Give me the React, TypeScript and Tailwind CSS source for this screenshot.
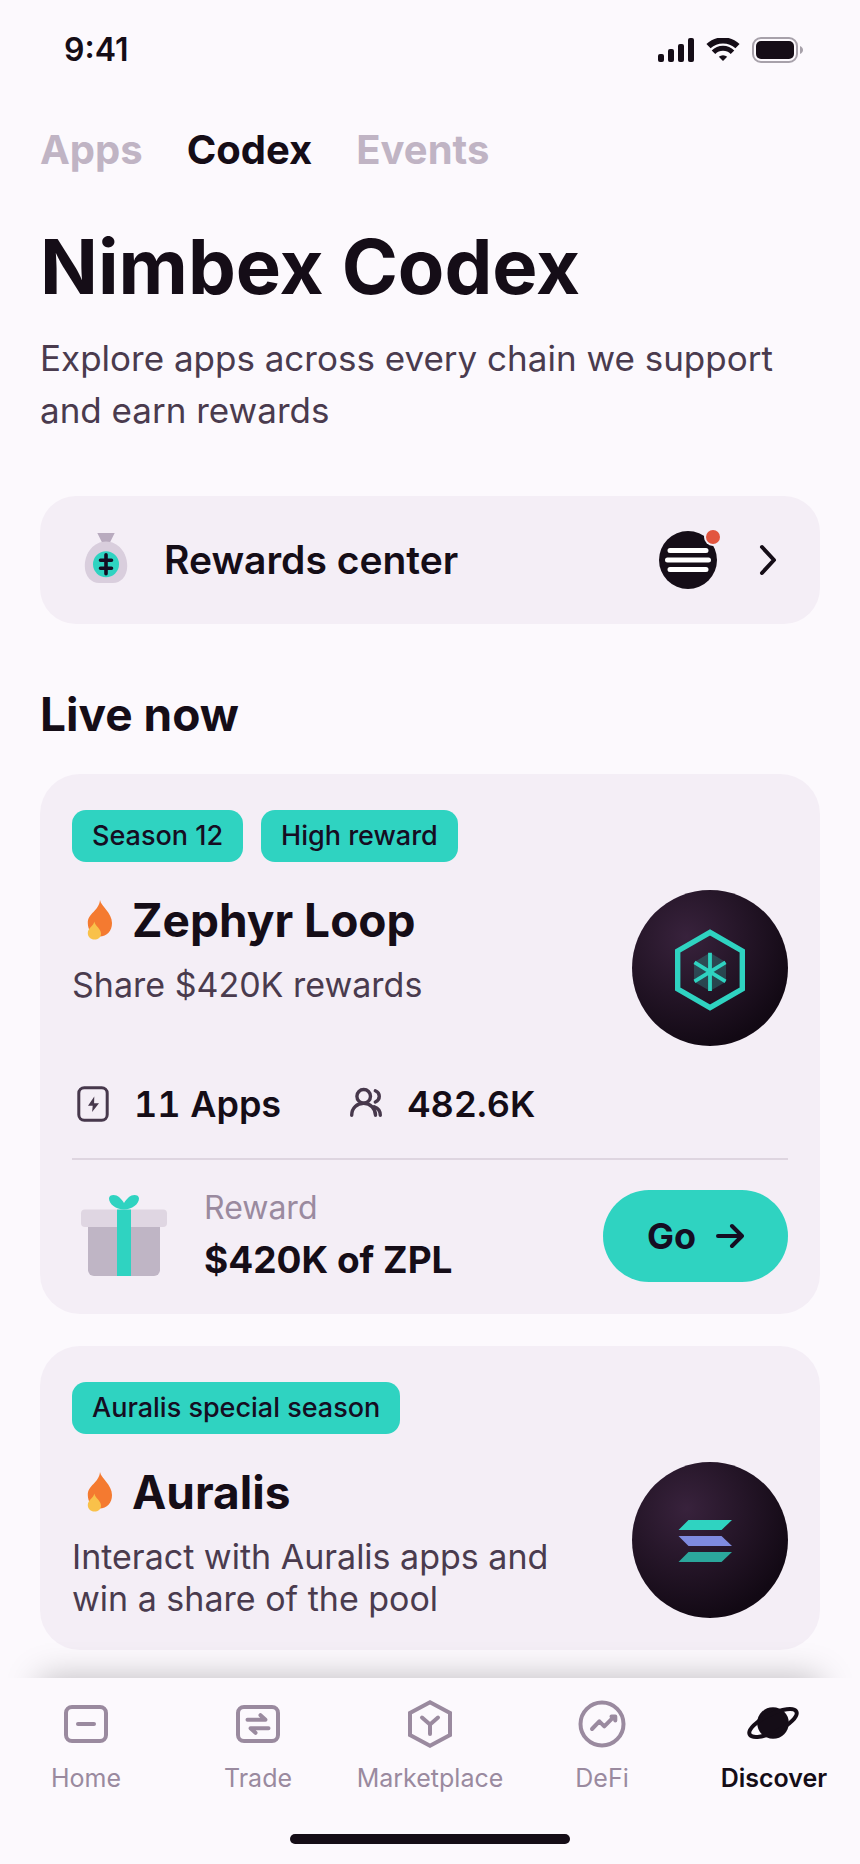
import React, { useState } from 'react';

const tabs = ['Apps', 'Codex', 'Events'];

const SignalIcon = () => (
  <svg width="36" height="24" viewBox="0 0 36 24" fill="currentColor" aria-hidden="true">
    <rect x="0" y="16" width="6" height="8" rx="2" />
    <rect x="10" y="11" width="6" height="13" rx="2" />
    <rect x="20" y="6" width="6" height="18" rx="2" />
    <rect x="30" y="0" width="6" height="24" rx="2" />
  </svg>
);

const WifiIcon = () => (
  <svg width="34" height="24" viewBox="0 0 34 24" fill="none" stroke="currentColor" aria-hidden="true">
    <path d="M2.5 8.2a21 21 0 0 1 29 0" strokeWidth="6" />
    <path d="M7.5 14.200a13.400 13.400 0 0 1 19 0" strokeWidth="5" />
    <path d="M12.8 18.800a6.400 6.400 0 0 1 8.400 0L17 23Z" fill="currentColor" stroke="none" />
  </svg>
);

const BatteryIcon = () => (
  <svg width="52" height="26" viewBox="0 0 52 26" fill="none" aria-hidden="true">
    <rect x="1" y="1" width="44" height="24" rx="8" stroke="#a7a1aa" strokeWidth="2" />
    <rect x="4" y="4" width="38" height="18" rx="5" fill="#150d17" />
    <path d="M48 9c4 1.600 4 6.400 0 8Z" fill="#a7a1aa" />
  </svg>
);

const MoneyBagIcon = () => (
  <svg width="44" height="54" viewBox="0 1 44 54" fill="none" aria-hidden="true">
    <path d="M13.300 1h17.400l-4.500 9h-8.400Z" fill="#b9abbf" />
    <path d="M22 9.500c12 0 21.200 11 21.200 24.500C43.200 45 36 51 29 51H15C8 51 .8 45 .8 34 .8 20.500 10 9.500 22 9.500Z" fill="#d9cedd" />
    <circle cx="22" cy="32.300" r="13" fill="#2fd3c1" />
    <path d="M22 22.800v19M16.500 28.300h11M16.500 36.300h11" stroke="#150d22" strokeWidth="3.600" strokeLinecap="round" />
  </svg>
);

const StackBadge = () => (
  <svg width="66" height="66" viewBox="0 0 66 66" fill="none" aria-hidden="true">
    <circle cx="32" cy="33" r="29" fill="#150d17" />
    <path d="M14 23.500h36M11.500 33h41M14 42.500h36" stroke="#fff" strokeWidth="5" strokeLinecap="round" />
    <circle cx="57" cy="10" r="9" fill="#f4eef6" />
    <circle cx="57" cy="10" r="7" fill="#e2553f" />
  </svg>
);

const FlameIcon = () => (
  <svg width="52" height="44" viewBox="0 0 52 44" aria-hidden="true">
    <path d="M28 2c1 6.500 12 12.500 12 23 0 8-5 13.500-12.500 13.500S15.800 32 15.800 25C15.800 15 27 13 28 2Z" fill="#f47a30" />
    <path d="M22.300 23.500c.6 4.500 6.700 7 6.700 12 0 4-3 6-6.600 6s-6.600-2.500-6.600-6.500c0-5 6-7 6.500-11.500Z" fill="#f9c14a" />
  </svg>
);

const BoltCardIcon = () => (
  <svg width="40" height="40" viewBox="0 0 40 40" fill="none" aria-hidden="true">
    <rect x="6.800" y="3.800" width="28.400" height="32.400" rx="5.500" stroke="#47384c" strokeWidth="3" />
    <path d="m22.300 12.500-6.300 9.200h4.700l-.6 6.200L27 19.300h-4.900Z" fill="#47384c" />
  </svg>
);

const UsersIcon = () => (
  <svg width="40" height="40" viewBox="0 0 40 40" fill="none" stroke="#47384c" strokeWidth="3.400" strokeLinecap="round" aria-hidden="true">
    <circle cx="18.700" cy="12.300" r="6.800" />
    <path d="M6.700 31.300c0-7.500 5.500-12 12-12s11.800 5 11.800 12" />
    <path d="M30.300 6.800c5.200 2.200 5.400 8.600 0 11.200M29.300 22.800c3.700 1.200 6 4.500 6 8.500" />
  </svg>
);

const GiftIcon = () => (
  <svg className="self-start" width="104" height="92" viewBox="0 0 104 92" aria-hidden="true">
    <rect x="16" y="32" width="72" height="56" rx="6" fill="#bfb5c5" />
    <rect x="9" y="21.500" width="86" height="17.500" rx="4" fill="#dfd6e2" />
    <rect x="45" y="21.500" width="14" height="66.500" fill="#2fd3c1" />
    <path d="M52 21.500c-8 0-15-5.500-15-11C37 6 44 6 47 9c2 2 4 4 5 6 1-2 3-4 5-6 3-3 10-3 10 1.500 0 5.500-7 11-15 11Z" fill="#2fd3c1" />
  </svg>
);

const ZephyrLogo = () => (
  <svg viewBox="0 0 156 156" fill="none" stroke="#2fd3c1" aria-hidden="true">
    <path d="M78 42.300 110.300 61v38L78 117.700 45.700 99V61Z" strokeWidth="5.400" />
    <path d="m78 62.700 16 9.500v19.500L78 101l-16-9.300V72.200Z" fill="#2fd3c1" fillOpacity=".25" stroke="none" />
    <path d="M78 62.700V101M62.500 72.300l31 19M93.500 72.300l-31 19" strokeWidth="3.800" />
  </svg>
);

const AuralisLogo = () => (
  <svg viewBox="0 0 156 156" aria-hidden="true">
    <path d="M56.500 58H100l-10.500 10h-43Z" fill="#2fd3c1" />
    <path d="M46.500 74h43L100 84H56.500Z" fill="#7f8be0" />
    <path d="M56.500 90H100l-10.500 10h-43Z" fill="#2ba79c" />
  </svg>
);

const NavIcon: React.FC<{ children: React.ReactNode }> = ({ children }) => (
  <svg width="56" height="56" viewBox="0 0 56 56" fill="none" stroke="currentColor" strokeWidth="4" strokeLinecap="round" strokeLinejoin="round" aria-hidden="true">
    {children}
  </svg>
);

const navItems = [
  {
    label: 'Home',
    icon: (
      <NavIcon>
        <rect x="8" y="11" width="40" height="34" rx="6" />
        <path d="M20 28h16" />
      </NavIcon>
    ),
  },
  {
    label: 'Trade',
    icon: (
      <NavIcon>
        <rect x="8" y="11" width="40" height="34" rx="6" />
        <path d="M17.500 23.700h18l-5-4.500M38.500 32.300h-18l5 4.500" />
      </NavIcon>
    ),
  },
  {
    label: 'Marketplace',
    icon: (
      <NavIcon>
        <path d="M28 6.300 48 17v22L28 49.700 8 39V17Z" strokeLinejoin="miter" />
        <path d="m20 21.500 8 7 8-7M28 28.500V38" />
      </NavIcon>
    ),
  },
  {
    label: 'DeFi',
    icon: (
      <NavIcon>
        <circle cx="28" cy="28" r="21.500" />
        <path d="m18 33 7.300-7.700 5 5L40 20.700M37.500 20.500h3.800v4" />
      </NavIcon>
    ),
  },
  {
    label: 'Discover',
    icon: (
      <NavIcon>
        <circle cx="27" cy="27" r="15.800" fill="currentColor" stroke="none" />
        <ellipse cx="27" cy="27" rx="26" ry="9" transform="rotate(-26 27 27)" />
      </NavIcon>
    ),
  },
];

interface CampaignCardProps {
  badges: string[];
  title: string;
  description: string;
  logo: React.ReactNode;
  children?: React.ReactNode;
}

const CampaignCard: React.FC<CampaignCardProps> = ({ badges, title, description, logo, children }) => (
  <article className="rounded-[40px] bg-[#f4eef6] px-8 pt-9 pb-[30px]">
    <div className="flex flex-wrap gap-[18px]">
      {badges.map((badge) => (
        <span key={badge} className="rounded-[14px] bg-[#2fd3c1] px-5 text-[27px] leading-[52px] font-medium text-[#150d22]">
          {badge}
        </span>
      ))}
    </div>
    <div className="mt-7 flex items-start justify-between gap-8">
      <div className="max-w-[500px]">
        <h3 className="flex items-center gap-2 text-[46px] leading-[60px] font-bold">
          <FlameIcon />
          {title}
        </h3>
        <p className="mt-[14px] text-[34px] leading-[42px] text-[#4a3b4e]">{description}</p>
      </div>
      <div className="size-[156px] shrink-0 rounded-full bg-[radial-gradient(circle_at_35%_30%,#38223c,#120914_75%)]">
        {logo}
      </div>
    </div>
    {children}
  </article>
);

export default function App() {
  const [activeTab, setActiveTab] = useState('Codex');
  const [activeNav, setActiveNav] = useState('Discover');

  return (
    <div className="flex min-h-screen flex-col bg-[#fcf9fd] font-['Inter',sans-serif] text-[#150d17]">
      <header className="flex items-center justify-between px-14 pt-[30px]">
        <span className="pl-2 text-[32px] leading-10 font-semibold">9:41</span>
        <div className="flex items-center gap-3">
          <SignalIcon />
          <WifiIcon />
          <BatteryIcon />
        </div>
      </header>

      <main className="flex-1 px-10 pt-[54px] pb-6">
        <div role="tablist" className="flex gap-11">
          {tabs.map((tab) => (
            <button
              key={tab}
              role="tab"
              aria-selected={activeTab === tab}
              onClick={() => setActiveTab(tab)}
              className={`text-[40px] leading-[52px] font-bold ${activeTab === tab ? 'text-[#150d17]' : 'text-[#c0b4c4]'}`}
            >
              {tab}
            </button>
          ))}
        </div>

        <h1 className="mt-[42px] text-[76px] leading-[96px] font-bold">Nimbex Codex</h1>
        <p className="mt-[18px] text-[35px] leading-[52px] text-[#4a3b4e]">
          Explore apps across every chain we support and earn rewards
        </p>

        <button className="mt-[60px] flex h-32 w-full items-center rounded-[36px] bg-[#f4eef6] pr-10 pl-11 text-left">
          <MoneyBagIcon />
          <span className="ml-9 flex-1 text-[39px] leading-[52px] font-semibold">Rewards center</span>
          <StackBadge />
          <svg className="ml-[34px]" width="24" height="32" viewBox="0 0 24 32" fill="none" stroke="currentColor" strokeWidth="4" strokeLinecap="round" strokeLinejoin="round" aria-hidden="true">
            <path d="m6 3 12 13L6 29" />
          </svg>
        </button>

        <h2 className="mt-[60px] text-[46px] leading-[60px] font-bold">Live now</h2>

        <div className="mt-[30px] flex flex-col gap-8">
          <CampaignCard
            badges={['Season 12', 'High reward']}
            title="Zephyr Loop"
            description="Share $420K rewards"
            logo={<ZephyrLogo />}
          >
            <div className="mt-9 flex items-center gap-16 text-[36px] leading-[44px] font-semibold tabular-nums">
              <span className="flex items-center gap-[22px]">
                <BoltCardIcon />
                11 Apps
              </span>
              <span className="flex items-center gap-[22px]">
                <UsersIcon />
                482.6K
              </span>
            </div>
            <div className="mt-8 flex items-center border-t-2 border-[#ded5e0] pt-7">
              <GiftIcon />
              <div className="ml-7 flex-1">
                <p className="text-[32px] leading-10 text-[#9a8a9f]">Reward</p>
                <p className="mt-2 text-[37px] leading-[48px] font-bold">$420K of ZPL</p>
              </div>
              <button className="flex h-[92px] items-center gap-5 rounded-full bg-[#2fd3c1] px-11 text-[36px] leading-[44px] font-bold text-[#150d22]">
                Go
                <svg width="28" height="28" viewBox="0 0 28 28" fill="none" stroke="currentColor" strokeWidth="4" strokeLinecap="round" strokeLinejoin="round" aria-hidden="true">
                  <path d="M2 14h24M16 4l10 10-10 10" />
                </svg>
              </button>
            </div>
          </CampaignCard>

          <CampaignCard
            badges={['Auralis special season']}
            title="Auralis"
            description="Interact with Auralis apps and win a share of the pool"
            logo={<AuralisLogo />}
          />
        </div>
      </main>

      <nav className="sticky bottom-0 bg-[#fcf9fd] pt-[18px] pb-5 shadow-[0_-40px_32px_-40px_rgba(0,0,0,0.25)]">
        <div className="grid grid-cols-5">
          {navItems.map(({ label, icon }) => (
            <a
              key={label}
              href={`#${label.toLowerCase()}`}
              onClick={() => setActiveNav(label)}
              className={`flex flex-col items-center gap-[10px] text-[25px] leading-8 ${
                activeNav === label ? 'font-semibold text-[#150d17]' : 'text-[#9a8a9f]'
              }`}
            >
              {icon}
              {label}
            </a>
          ))}
        </div>
        <div className="mx-auto mt-10 h-[10px] w-[280px] rounded-full bg-[#150d17]" />
      </nav>
    </div>
  );
}
